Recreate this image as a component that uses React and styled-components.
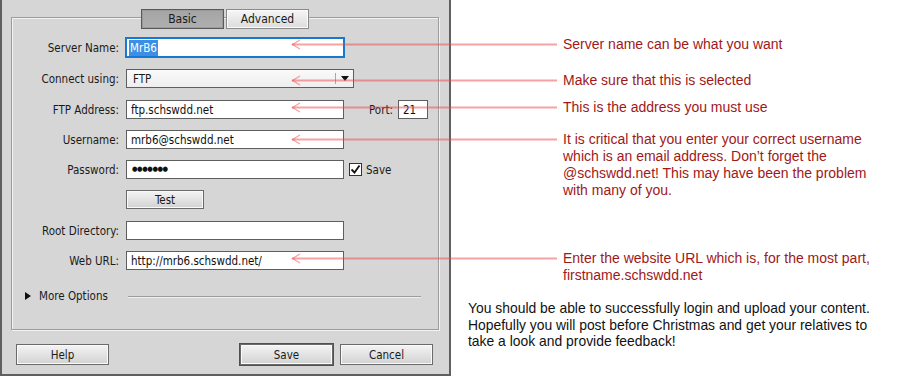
import React from 'react';
import styled, { createGlobalStyle } from 'styled-components';

const GlobalStyle = createGlobalStyle`
    html, body {
        margin: 0;
        padding: 0;
        background: #fff;
    }
    body {
        width: 900px;
        height: 376px;
        overflow: hidden;
    }
`

const Page = styled.div`
    position: relative;
    display: flex;
    width: 900px;
    height: 376px;
`

const Dialog = styled.div`
    box-sizing: border-box;
    width: 451px;
    height: 376px;
    flex: none;
    background: #d6d6d6;
    border: 2px solid #606060;
    border-top: none;
    display: flex;
    flex-direction: column;
    font-family: "DejaVu Sans Condensed", "DejaVu Sans", sans-serif;
    font-size: 11.5px;
    color: #1a1a1a;
`

const Panel = styled.div`
    box-sizing: border-box;
    width: 428px;
    height: 313px;
    margin: 17px 0 0 9px;
    border: 1px solid #9c9c9c;
    box-shadow: inset 1px 1px 0 #f2f2f2, 1px 1px 0 #f2f2f2;
    display: flex;
    flex-direction: column;
`

const TabRow = styled.div`
    display: flex;
    justify-content: center;
    gap: 2px;
    margin-top: -9px;
`

const Tab = styled.div`
    box-sizing: border-box;
    width: 83px;
    height: 20px;
    display: flex;
    align-items: center;
    justify-content: center;
    font-size: 12px;
    border: 1px solid ${props => props.$active ? '#5a5a5a' : '#8a8a8a'};
    background: ${props => props.$active
        ? 'linear-gradient(#a4a4a4, #b0b0b0)'
        : 'linear-gradient(#f6f6f6, #dcdcdc)'};
    box-shadow: inset 0 0 0 1px ${props => props.$active ? '#9a9a9a' : '#fbfbfb'};
`

const FormGrid = styled.div`
    display: grid;
    grid-template-columns: 107px 1fr;
    grid-template-rows: 31px 31px 30px 30px 30px 31px 30px 19px;
    column-gap: 7px;
    margin-top: 9px;
`

const Label = styled.div`
    height: 19px;
    display: flex;
    align-items: center;
    justify-content: flex-end;
`

const Field = styled.div`
    height: 19px;
    display: flex;
    align-items: center;
`

const TextBox = styled.div`
    box-sizing: border-box;
    width: ${props => props.$width || 218}px;
    height: 19px;
    background: #fff;
    border: 1px solid ${props => props.$focused ? '#1778d2' : '#5e5e5e'};
    outline: ${props => props.$focused ? '1px solid #1778d2' : 'none'};
    padding-left: ${props => props.$focused ? 2 : 4}px;
    display: flex;
    align-items: center;
    color: #111;
    white-space: nowrap;
`

const Selected = styled.span`
    background: #3c8fe4;
    color: #fff;
    padding: 1px 1px;
`

const Dots = styled.span`
    font-size: 7px;
    letter-spacing: -0.4px;
    line-height: 1;
    padding-left: 1px;
`

const Select = styled.div`
    box-sizing: border-box;
    width: 228px;
    height: 19px;
    border: 1px solid #5e5e5e;
    background: linear-gradient(#fafafa, #eeeeee);
    display: flex;
    align-items: center;
`

const SelectValue = styled.div`
    flex: 1;
    padding-left: 6px;
`

const SelectArrow = styled.div`
    width: 17px;
    height: 11px;
    border-left: 1px solid #a8a8a8;
    display: flex;
    align-items: center;
    justify-content: center;

    &::after {
        content: '';
        border-left: 4px solid transparent;
        border-right: 4px solid transparent;
        border-top: 5px solid #111;
    }
`

const SideLabel = styled.span`
    margin-left: ${props => props.$gap}px;
    margin-right: ${props => props.$after}px;
`

const CheckBox = styled.div`
    box-sizing: border-box;
    width: 13px;
    height: 13px;
    margin-left: 5px;
    background: #fff;
    border: 1px solid #333;
    display: flex;
    align-items: center;
    justify-content: center;
`

const Button = styled.div`
    box-sizing: border-box;
    width: ${props => props.$width}px;
    height: ${props => props.$height || 21}px;
    border: 1px solid #6a6a6a;
    outline: ${props => props.$default ? '1px solid #505050' : 'none'};
    background: linear-gradient(#f4f4f4, #d2d2d2);
    box-shadow: inset 0 0 0 1px #fafafa;
    display: flex;
    align-items: center;
    justify-content: center;
`

const MoreOptions = styled.div`
    display: flex;
    align-items: center;
    margin: 20px 17px 0 13px;
    height: 12px;
`

const Triangle = styled.span`
    width: 0;
    height: 0;
    border-top: 4px solid transparent;
    border-bottom: 4px solid transparent;
    border-left: 6px solid #111;
    margin-right: 8px;
`

const Rule = styled.div`
    flex: 1;
    height: 1px;
    margin-left: 20px;
    background: #9c9c9c;
    box-shadow: 0 1px 0 #efefef;
`

const ButtonBar = styled.div`
    display: flex;
    gap: 7px;
    margin: 14px 16px 0 14px;

    & > :first-child {
        margin-right: auto;
    }
`

const Notes = styled.div`
    flex: 1;
    display: flex;
    flex-direction: column;
    padding: 36px 0 0 17px;
    font-family: "Liberation Sans", Arial, sans-serif;
`

const Note = styled.div`
    margin: ${props => props.$top}px 0 0 95px;
    font-size: 14px;
    line-height: 17px;
    color: #a01818;
    white-space: nowrap;
`

const Closing = styled.div`
    margin-top: ${props => props.$top}px;
    font-size: 13.9px;
    line-height: 16.5px;
    color: #111;
    white-space: nowrap;
`

const Overlay = styled.svg`
    position: absolute;
    left: 0;
    top: 0;
    pointer-events: none;
`

const arrows = [44, 80, 107, 139, 258];

function Arrows() {
    return (
        <Overlay width="900" height="376" viewBox="0 0 900 376">
            {arrows.map(y => (
                <g key={y} stroke="rgba(240, 70, 70, 0.5)" fill="none">
                    <line x1="292" y1={y + 0.5} x2="557" y2={y + 0.5} strokeWidth="2" />
                    <polyline points={`300,${y - 4} 292.5,${y + 0.5} 300,${y + 5}`} strokeWidth="1.2" />
                </g>
            ))}
        </Overlay>
    );
}

export default function App() {
    return (
        <Page>
            <GlobalStyle />
            <Dialog>
                <Panel>
                    <TabRow>
                        <Tab $active>Basic</Tab>
                        <Tab>Advanced</Tab>
                    </TabRow>
                    <FormGrid>
                        <Label>Server Name:</Label>
                        <Field>
                            <TextBox $focused><Selected>MrB6</Selected></TextBox>
                        </Field>

                        <Label>Connect using:</Label>
                        <Field>
                            <Select>
                                <SelectValue>FTP</SelectValue>
                                <SelectArrow />
                            </Select>
                        </Field>

                        <Label>FTP Address:</Label>
                        <Field>
                            <TextBox>ftp.schswdd.net</TextBox>
                            <SideLabel $gap={25} $after={5}>Port:</SideLabel>
                            <TextBox $width={30}>21</TextBox>
                        </Field>

                        <Label>Username:</Label>
                        <Field>
                            <TextBox>mrb6@schswdd.net</TextBox>
                        </Field>

                        <Label>Password:</Label>
                        <Field>
                            <TextBox><Dots>●●●●●●●</Dots></TextBox>
                            <CheckBox>
                                <svg width="11" height="11" viewBox="0 0 11 11">
                                    <path d="M1.5 5.5 L4.5 8.5 L9.5 1.5" stroke="#111" strokeWidth="1.8" fill="none" />
                                </svg>
                            </CheckBox>
                            <SideLabel $gap={4} $after={0}>Save</SideLabel>
                        </Field>

                        <span />
                        <Field>
                            <Button $width={78} $height={19}>Test</Button>
                        </Field>

                        <Label>Root Directory:</Label>
                        <Field>
                            <TextBox />
                        </Field>

                        <Label>Web URL:</Label>
                        <Field>
                            <TextBox>http://mrb6.schswdd.net/</TextBox>
                        </Field>
                    </FormGrid>
                    <MoreOptions>
                        <Triangle />
                        More Options
                        <Rule />
                    </MoreOptions>
                </Panel>
                <ButtonBar>
                    <Button $width={93}>Help</Button>
                    <Button $width={93} $default>Save</Button>
                    <Button $width={93}>Cancel</Button>
                </ButtonBar>
            </Dialog>
            <Notes>
                <Note $top={0}>Server name can be what you want</Note>
                <Note $top={19}>Make sure that this is selected</Note>
                <Note $top={10}>This is the address you must use</Note>
                <Note $top={15}>
                    It is critical that you enter your correct username<br />
                    which is an email address. Don’t forget the<br />
                    @schswdd.net! This may have been the problem<br />
                    with many of you.
                </Note>
                <Note $top={51}>
                    Enter the website URL which is, for the most part,<br />
                    firstname.schswdd.net
                </Note>
                <Closing $top={16}>
                    You should be able to successfully login and upload your content.<br />
                    Hopefully you will post before Christmas and get your relatives to<br />
                    take a look and provide feedback!
                </Closing>
            </Notes>
            <Arrows />
        </Page>
    );
}
